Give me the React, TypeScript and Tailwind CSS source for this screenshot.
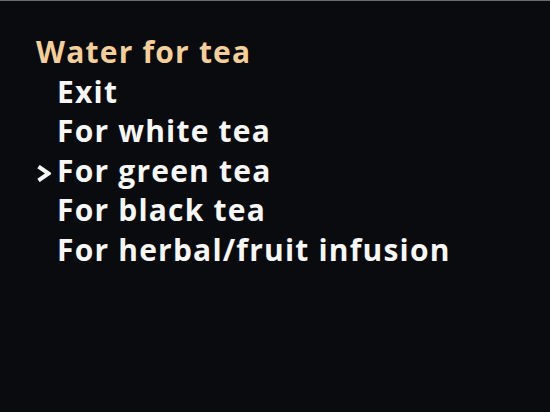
import React from "react";

const items = [
	"Exit",
	"For white tea",
	"For green tea",
	"For black tea",
	"For herbal/fruit infusion",
];

export default function App() {
	const selected = 2;

	return (
		<div className="w-[550px] h-[412px] bg-[#0a0b0e] border-t border-[#6b6b6b] overflow-hidden">
			<div
				className="flex flex-col pl-[36px] pt-[31px] font-bold text-[30px] leading-[39.6px] tracking-[1.2px]"
				style={{ fontFamily: '"Open Sans", sans-serif' }}
			>
				<div className="text-[#f4cf9c]">Water for tea</div>
				{items.map((item, i) => (
					<div key={i} className="flex items-center text-[#f7f7f7]">
						<span className="w-[21px] flex items-center">
							{i === selected && (
								<svg width="15" height="17" viewBox="0 0 15 17" className="mt-[5px]">
									<path d="M2.5 1.5 L12.5 8.5 L2.5 15.5" fill="none" stroke="#f7f7f7" strokeWidth="4" strokeLinejoin="miter" />
								</svg>
							)}
						</span>
						{item}
					</div>
				))}
			</div>
		</div>
	);
}
